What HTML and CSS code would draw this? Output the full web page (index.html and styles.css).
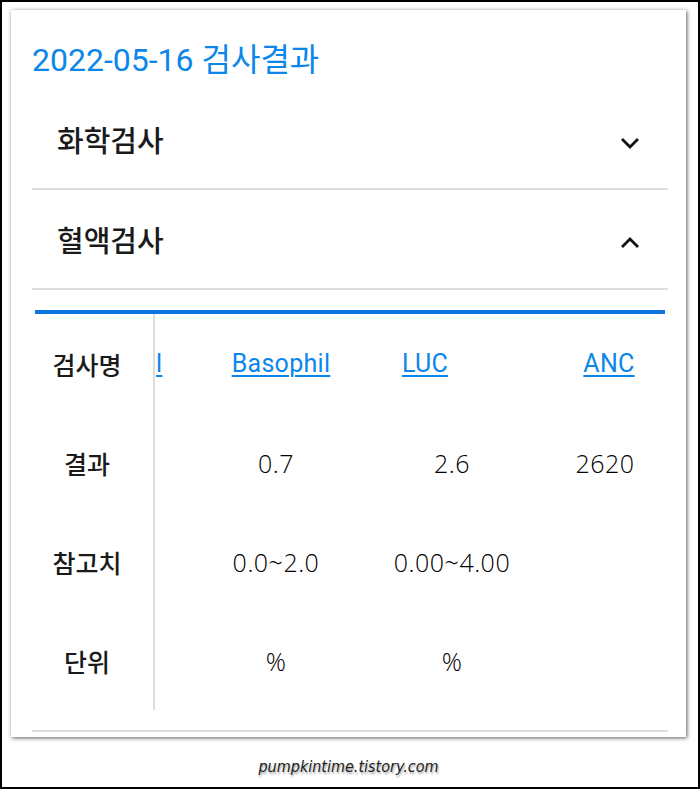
FILE: index.html
```html
<!DOCTYPE html>
<html lang="ko">
<head>
    <meta charset="UTF-8">
    <meta name="viewport" content="width=device-width, initial-scale=1.0">
    <title>검사결과</title>
    <link rel="stylesheet" href="styles.css">
</head>
<body>
    <div class="frame">
        <div class="card">
            <h1 class="title">2022-05-16 검사결과</h1>

            <div class="acc-row">
                <span class="acc-name">화학검사</span>
                <svg class="chev" width="20" height="12" viewBox="0 0 20 12"><path d="M2 2 L10 10 L18 2" fill="none" stroke="#111" stroke-width="2.8"/></svg>
            </div>
            <div class="acc-row">
                <span class="acc-name">혈액검사</span>
                <svg class="chev" width="20" height="12" viewBox="0 0 20 12"><path d="M2 10 L10 2 L18 10" fill="none" stroke="#111" stroke-width="2.8"/></svg>
            </div>

            <div class="result">
                <div class="labels">
                    <div class="label">검사명</div>
                    <div class="label">결과</div>
                    <div class="label">참고치</div>
                    <div class="label">단위</div>
                </div>
                <div class="data">
                    <div class="col col-cut">
                        <div class="cell"><a href="#">l</a></div>
                        <div class="cell"></div>
                        <div class="cell"></div>
                        <div class="cell"></div>
                    </div>
                    <div class="col col-baso">
                        <div class="cell head"><a href="#">Basophil</a></div>
                        <div class="cell">0.7</div>
                        <div class="cell">0.0~2.0</div>
                        <div class="cell">%</div>
                    </div>
                    <div class="col col-luc">
                        <div class="cell head"><a href="#">LUC</a></div>
                        <div class="cell">2.6</div>
                        <div class="cell">0.00~4.00</div>
                        <div class="cell">%</div>
                    </div>
                    <div class="col col-anc">
                        <div class="cell head"><a href="#">ANC</a></div>
                        <div class="cell">2620</div>
                        <div class="cell"></div>
                        <div class="cell"></div>
                    </div>
                </div>
            </div>

            <div class="bottom-line"></div>
        </div>
        <div class="footer">pumpkintime.tistory.com</div>
    </div>
</body>
</html>
```

FILE: styles.css
```css
html, body {
    margin: 0;
    padding: 0;
    background: #fff;
}

.frame {
    width: 700px;
    height: 789px;
    box-sizing: border-box;
    border: 2px solid #000;
    padding: 8px 12px 0 9px;
    font-family: "Roboto", "Noto Sans CJK KR", sans-serif;
    color: #1a1a1a;
}

.card {
    height: 727px;
    box-sizing: border-box;
    padding: 0 18px 0 21px;
    background: #fff;
    box-shadow: 1px 1px 4px rgba(0, 0, 0, 0.65);
}

.title {
    margin: 0;
    padding-top: 30px;
    height: 50px;
    font-size: 32px;
    font-weight: 400;
    line-height: 40px;
    color: #0b86ea;
}

.acc-row {
    display: flex;
    align-items: center;
    justify-content: space-between;
    height: 100px;
    box-sizing: border-box;
    padding: 0 28px 0 25px;
    border-bottom: 2px solid #dedede;
}

.acc-name {
    font-family: "Noto Sans CJK KR", sans-serif;
    font-size: 29px;
    font-weight: 500;
    color: #1a1a1a;
}

.chev {
    margin-top: 8px;
}

.result {
    display: flex;
    margin: 20px 3px 0 3px;
    border-top: 4px solid #0a74e2;
    height: 396px;
}

.labels {
    width: 120px;
    box-sizing: border-box;
    padding-right: 14px;
    border-right: 2px solid #dedede;
    display: flex;
    flex-direction: column;
}

.label {
    height: 99px;
    display: flex;
    align-items: center;
    justify-content: center;
    font-family: "Noto Sans CJK KR", sans-serif;
    font-size: 25px;
    font-weight: 500;
    color: #1a1a1a;
}

.data {
    flex: 1;
    display: flex;
    overflow: hidden;
}

.col {
    flex: none;
    display: flex;
    flex-direction: column;
}

.cell {
    height: 99px;
    display: flex;
    align-items: center;
    justify-content: center;
    font-family: "Open Sans", sans-serif;
    font-weight: 300;
    font-size: 25px;
    letter-spacing: 0.5px;
    color: #000;
}

.cell a {
    font-family: "Roboto", sans-serif;
    font-weight: 400;
    color: #0b86ea;
    font-size: 25px;
    letter-spacing: 0.3px;
    text-decoration: underline;
    text-decoration-thickness: 2px;
    text-underline-offset: 3px;
}

.col-cut {
    width: 33px;
}

.col-cut .cell {
    justify-content: flex-start;
    padding-left: 1px;
}

.col-baso {
    width: 176px;
}

.col-baso .head {
    padding-left: 10px;
}

.col-luc {
    width: 176px;
}

.col-luc .head {
    padding-right: 54px;
}

.col-anc {
    width: 130px;
}

.col-anc .head {
    padding-left: 8px;
}

.bottom-line {
    margin-top: 20px;
    border-top: 2px solid #dedede;
}

.footer {
    text-align: center;
    margin-top: 20px;
    font-family: "DejaVu Sans Condensed", "DejaVu Sans", sans-serif;
    font-style: italic;
    font-size: 16px;
    color: #222;
    text-shadow: 1px 2px 2px rgba(0, 0, 0, 0.35);
}
```
